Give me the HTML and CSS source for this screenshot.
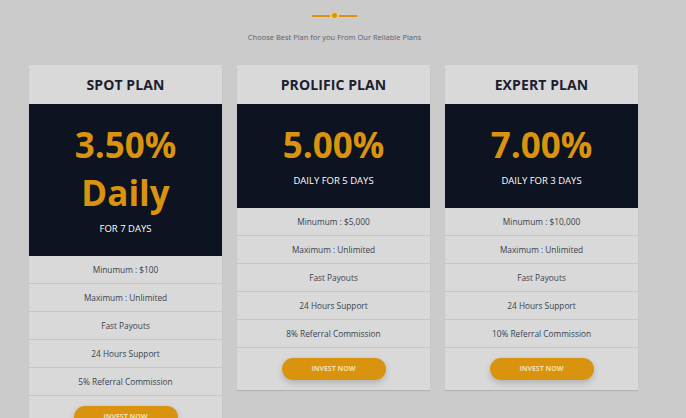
FILE: index.html
```html
<!DOCTYPE html>
<html>
<head>
<meta charset="utf-8">
<link rel="stylesheet" href="styles.css">
</head>
<body>
<section class="plans">
  <div class="divider">
    <span class="line"></span><span class="dot"></span><span class="line"></span>
  </div>
  <p class="subtitle">Choose Best Plan for you From Our Reliable Plans</p>
  <div class="cards">
    <div class="card">
      <div class="card-head">SPOT PLAN</div>
      <div class="card-rate">
        <div class="pct">3.50%</div>
        <div class="pct">Daily</div>
        <div class="period">FOR 7 DAYS</div>
      </div>
      <ul class="features">
        <li>Minumum : $100</li>
        <li>Maximum : Unlimited</li>
        <li>Fast Payouts</li>
        <li>24 Hours Support</li>
        <li>5% Referral Commission</li>
      </ul>
      <div class="card-foot"><a class="btn">INVEST NOW</a></div>
    </div>
    <div class="card">
      <div class="card-head">PROLIFIC PLAN</div>
      <div class="card-rate">
        <div class="pct">5.00%</div>
        <div class="period">DAILY FOR 5 DAYS</div>
      </div>
      <ul class="features">
        <li>Minumum : $5,000</li>
        <li>Maximum : Unlimited</li>
        <li>Fast Payouts</li>
        <li>24 Hours Support</li>
        <li>8% Referral Commission</li>
      </ul>
      <div class="card-foot"><a class="btn">INVEST NOW</a></div>
    </div>
    <div class="card">
      <div class="card-head">EXPERT PLAN</div>
      <div class="card-rate">
        <div class="pct">7.00%</div>
        <div class="period">DAILY FOR 3 DAYS</div>
      </div>
      <ul class="features">
        <li>Minumum : $10,000</li>
        <li>Maximum : Unlimited</li>
        <li>Fast Payouts</li>
        <li>24 Hours Support</li>
        <li>10% Referral Commission</li>
      </ul>
      <div class="card-foot"><a class="btn">INVEST NOW</a></div>
    </div>
  </div>
</section>
</body>
</html>
```
FILE: styles.css
```css
html, body {
  margin: 0;
  padding: 0;
  background: #cbcbcb;
  font-family: "Open Sans", "Noto Sans", sans-serif;
  overflow: hidden;
}
.plans {
  width: 669px;
  padding-top: 11px;
}
.divider {
  display: flex;
  align-items: center;
  justify-content: center;
  height: 9px;
}
.line {
  display: block;
  width: 18px;
  height: 2px;
  background: #d9930e;
}
.dot {
  display: block;
  box-sizing: border-box;
  width: 9px;
  height: 9px;
  border-radius: 50%;
  background: #d9930e;
  border: 2px solid #e9c98c;
}
.subtitle {
  margin: 11px 0 0;
  text-align: center;
  font-size: 7.5px;
  color: #5a6070;
  line-height: 12px;
}
.cards {
  display: flex;
  align-items: flex-start;
  gap: 15px;
  margin-top: 22px;
  padding-left: 29px;
}
.card {
  width: 193px;
  background: #d9d9d9;
  box-shadow: 0 1px 1px rgba(0,0,0,0.12);
}
.card-head {
  height: 39px;
  line-height: 39px;
  text-align: center;
  font-weight: 700;
  font-size: 14px;
  color: #1b2030;
  letter-spacing: 0.1px;
}
.card-rate {
  background: #0d1320;
  text-align: center;
  padding: 17px 0 21px;
}
.pct {
  color: #d9930e;
  font-size: 35px;
  font-weight: 700;
  line-height: 48px;
}
.period {
  color: #ffffff;
  font-size: 9.5px;
  margin-top: 6px;
  line-height: 12px;
}
.features {
  list-style: none;
  margin: 0;
  padding: 0;
}
.features li {
  height: 27px;
  line-height: 27px;
  border-bottom: 1px solid #c6c6c6;
  text-align: center;
  font-size: 8.3px;
  color: #3a3f4e;
}
.card-foot {
  height: 42px;
  display: flex;
  align-items: center;
  justify-content: center;
}
.btn {
  display: block;
  width: 104px;
  height: 22px;
  line-height: 22px;
  border-radius: 11px;
  background: #d9930e;
  color: #f3dfa8;
  font-size: 7px;
  font-weight: 700;
  text-align: center;
  box-shadow: 0 3px 6px rgba(0,0,0,0.18);
}
```
